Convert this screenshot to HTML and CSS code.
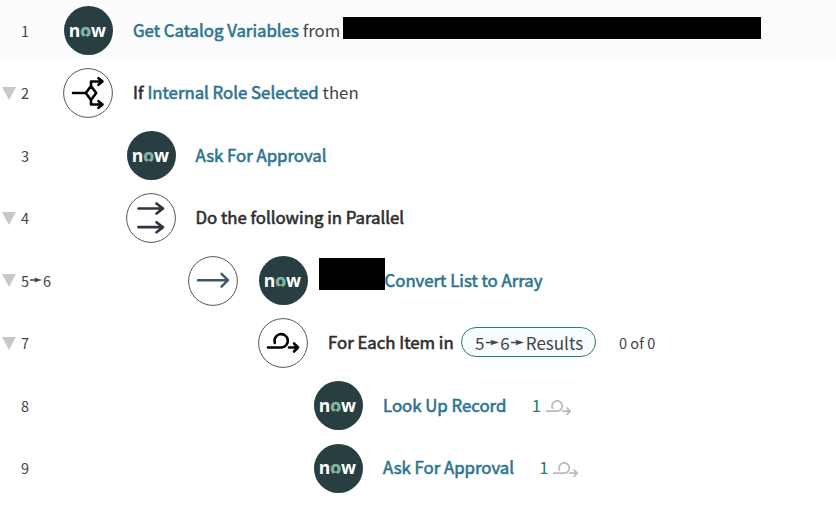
FILE: index.html
```html
<!DOCTYPE html>
<html lang="en">
<head>
<meta charset="utf-8">
<title>Flow actions</title>
<link rel="stylesheet" href="styles.css">
</head>
<body>
<svg class="defs" aria-hidden="true">
  <symbol id="ring" viewBox="0 0 50 50"><circle cx="25" cy="25" r="24.4" fill="#fff" stroke="#555" stroke-width="1"/></symbol>
  <symbol id="loop" viewBox="0 0 32 16">
    <path d="M1 14H15A6.6 6.6 0 1 0 8.2 10M21.5 14H30.5M27 10L31 14L27 18" fill="none" stroke="currentColor" stroke-linecap="round" stroke-linejoin="round"/>
  </symbol>
</svg>
<main class="flow">
  <div class="row shaded">
    <span class="num">1</span>
    <span class="now"><span class="word">n<i>o</i>w</span></span>
    <div class="label"><b class="link">Get Catalog Variables</b><span>from</span><i class="mask wide"></i></div>
  </div>
  <div class="row">
    <i class="tri"></i><span class="num">2</span>
    <svg class="icon" viewBox="0 0 50 50"><use href="#ring"/><g class="stroke black"><path d="M10 25H22M28 18L33.2 25L28 32L22.8 25ZM28 18V13.5H39M28 32V36.5H39M35.5 10.2L39.5 13.5L35.5 16.8M35.5 33.2L39.5 36.5L35.5 39.8"/></g></svg>
    <div class="label"><b>If</b><b class="link">Internal Role Selected</b><span>then</span></div>
  </div>
  <div class="row l1">
    <span class="num">3</span>
    <span class="now"><span class="word">n<i>o</i>w</span></span>
    <div class="label"><b class="link">Ask For Approval</b></div>
  </div>
  <div class="row l1">
    <i class="tri"></i><span class="num">4</span>
    <svg class="icon" viewBox="0 0 50 50"><use href="#ring"/><g class="stroke slate"><path d="M12.5 15.5H37M30.5 10.5L37 15.5L30.5 20.5M12.5 34.2H37M30.5 29.2L37 34.2L30.5 39.2"/></g></svg>
    <div class="label"><b>Do the following in Parallel</b></div>
  </div>
  <div class="row l2">
    <i class="tri"></i><span class="num">5<svg class="tiny" viewBox="0 0 12 6"><path d="M0 2.3H5L4 0.5L12 3L4 5.5L5 3.7H0Z"/></svg>6</span>
    <svg class="icon" viewBox="0 0 50 50"><use href="#ring"/><g class="stroke blue"><path d="M10 24.2H40M33.5 17.8L40 24.2L33.5 30.6"/></g></svg>
    <span class="now second"><span class="word">n<i>o</i>w</span></span>
    <div class="label convert"><i class="mask small"></i><b class="link">Convert List to Array</b></div>
  </div>
  <div class="row l3">
    <i class="tri"></i><span class="num">7</span>
    <svg class="icon" viewBox="0 0 50 50"><use href="#ring"/><g class="stroke black"><path d="M10 29.5H23.5A6.7 6.7 0 1 0 16.8 25M31 29.5H40M36 25.5L40 29.5L36 33.5"/></g></svg>
    <div class="label"><b>For Each Item in</b><span class="pill">5<svg class="tiny" viewBox="0 0 12 6"><path d="M0 2.3H5L4 0.5L12 3L4 5.5L5 3.7H0Z"/></svg>6<svg class="tiny" viewBox="0 0 12 6"><path d="M0 2.3H5L4 0.5L12 3L4 5.5L5 3.7H0Z"/></svg>Results</span><span class="count">0 of 0</span></div>
  </div>
  <div class="row l4">
    <span class="num">8</span>
    <span class="now"><span class="word">n<i>o</i>w</span></span>
    <div class="label"><b class="link">Look Up Record</b><span class="runs">1</span><svg class="repeat"><use href="#loop"/></svg></div>
  </div>
  <div class="row l4">
    <span class="num">9</span>
    <span class="now"><span class="word">n<i>o</i>w</span></span>
    <div class="label"><b class="link">Ask For Approval</b><span class="runs">1</span><svg class="repeat"><use href="#loop"/></svg></div>
  </div>
</main>
</body>
</html>
```
FILE: styles.css
```css
body {
  margin: 0;
  background: #fff;
  color: #444;
  font-family: "Noto Sans CJK SC", "Noto Sans", sans-serif;
  overflow: hidden;
}
.defs { position: absolute; width: 0; height: 0; }
.flow { margin-top: -0.7px; }
.row {
  position: relative;
  display: flex;
  align-items: center;
  height: 62.5px;
  padding-left: 63px;
  white-space: nowrap;
}
.shaded { background: #fcfcfc; }
.l1 { padding-left: 126px; }
.l2 { padding-left: 188px; }
.l3 { padding-left: 258px; }
.l4 { padding-left: 313px; }
.num {
  position: absolute;
  left: 21px;
  font-size: 14.5px;
  display: flex;
  align-items: center;
  margin-top: -0.6px;
}
.tri {
  position: absolute;
  left: 2px;
  top: 25px;
  border: 7.5px solid transparent;
  border-top: 13px solid #c8c8c8;
  border-bottom: 0;
}
.icon { width: 50px; height: 50px; flex: none; }
.now {
  display: flex;
  align-items: center;
  justify-content: center;
  box-sizing: border-box;
  width: 49px;
  height: 49px;
  margin: 0 0.5px;
  flex: none;
  border-radius: 50%;
  background: #293e40;
  color: #fff;
  font: bold 17.5px/20px "Open Sans", sans-serif;
}
.word { transform: translate(-0.6px, -1.2px); }
.word i {
  position: relative;
  font-style: normal;
  color: #81b5a1;
  -webkit-text-stroke: 0.4px #81b5a1;
}
.word i::after {
  content: "";
  position: absolute;
  left: 3.6px;
  bottom: 3.4px;
  width: 3.8px;
  height: 2.6px;
  border-radius: 50% 50% 0 0;
  background: #293e40;
}
.second { margin-left: 20.5px; }
.stroke { fill: none; stroke-linecap: round; stroke-linejoin: round; }
.black { stroke: #000; stroke-width: 2.6; }
.slate { stroke: #2e3440; stroke-width: 2.7; }
.blue { stroke: #42566a; stroke-width: 2.4; }
.label {
  display: flex;
  align-items: center;
  gap: 4px;
  margin: -1.6px 0 0 20px;
  font-size: 16.8px;
}
.l1 .label { margin-left: 19.5px; }
b { font-weight: 400; color: #2e2e2e; -webkit-text-stroke: 0.6px currentColor; }
.link { color: #2e7490; }
.mask { background: #000; }
.wide { width: 418px; height: 22px; margin: -3.4px 0 0 -1.7px; }
.small { width: 66px; height: 32px; margin-top: -12px; }
.label.convert { gap: 0; margin-left: 11px; }
.convert .link { margin-left: -0.5px; }
.tiny { width: 12px; height: 6px; fill: #444; flex: none; margin: 0 1px; }
.pill {
  display: flex;
  align-items: center;
  box-sizing: border-box;
  height: 30px;
  width: 135px;
  padding-left: 13px;
  margin-left: 3.2px;
  border: 1px solid #278073;
  border-radius: 15px;
  background: #f7fcff;
  font-size: 17px;
}
.pill .tiny { width: 13px; height: 7px; margin: 0 1.5px; }
.count { font-size: 14.6px; margin-left: 19px; }
.runs { color: #278073; margin-left: 21.3px; }
.repeat { width: 25px; height: 13px; margin: 3px 0 0 0.6px; color: #bbb; stroke-width: 2.3; overflow: visible; }
#loop { overflow: visible; }
```
